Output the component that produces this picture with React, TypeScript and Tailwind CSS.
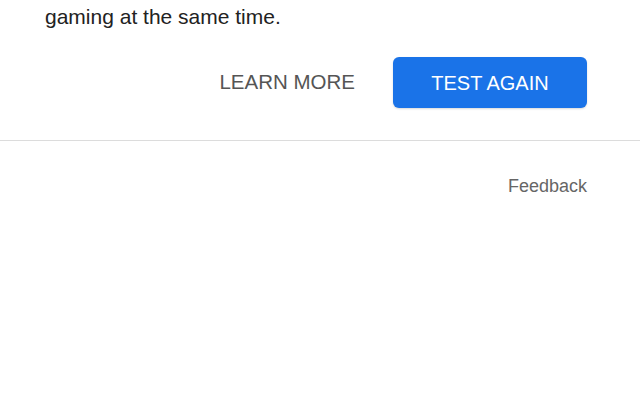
import React from "react";

const App = () => {
  return (
    <div className="min-h-screen w-[640px] h-[400px] bg-white font-['Liberation_Sans',Arial,sans-serif] overflow-hidden">
      {/* Result text + actions */}
      <div className="pl-[45px] pr-[53px]">
        <p className="text-[21px] leading-[28px] text-[#222] pt-[3px]">
          gaming at the same time.
        </p>
        <div className="flex justify-end items-center mt-[26px] gap-[38px]">
          <button className="text-[20.5px] text-[#555]">
            LEARN MORE
          </button>
          <button className="w-[194px] h-[51px] rounded-[6px] bg-[#1a73e8] text-white text-[20px] shadow-[0_1px_2px_rgba(0,0,0,0.15)]">
            TEST AGAIN
          </button>
        </div>
      </div>

      {/* Divider */}
      <div className="mt-[32px] border-t border-[#dcdcdc]"></div>

      {/* Footer */}
      <div className="flex justify-end pr-[53px] pt-[32px]">
        <a href="#" className="text-[18px] text-[#666]">
          Feedback
        </a>
      </div>
    </div>
  );
};

export default App;
